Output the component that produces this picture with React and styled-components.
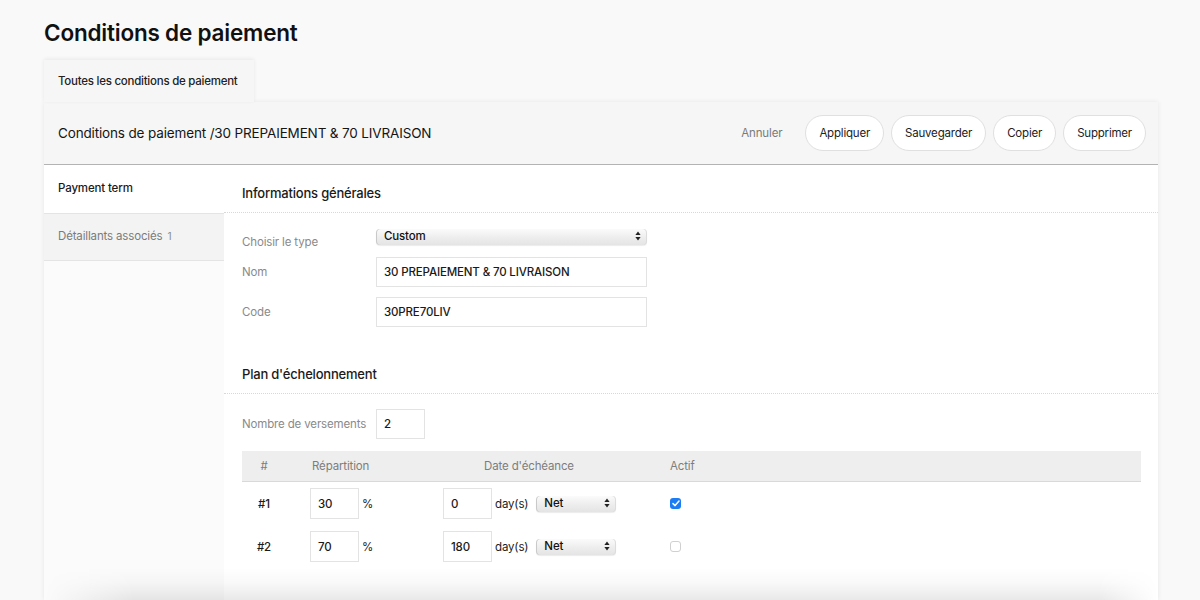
import React from "react";
import styled, { createGlobalStyle } from "styled-components";

const Global = createGlobalStyle`
  html, body { margin: 0; padding: 0; background: #f9f9f9; }
  body { font-family: Inter, "Noto Sans", sans-serif; color: #1d1d1d; -webkit-font-smoothing: antialiased; letter-spacing: -0.15px; }
  * { box-sizing: border-box; }
`;

const Page = styled.div`
  width: 1200px;
  height: 600px;
  overflow: hidden;
  padding: 0 42px 0 44px;
`;

const Title = styled.h1`
  margin: 0;
  padding-top: 18px;
  font-size: 22.5px;
  line-height: 30px;
  font-weight: 600;
  letter-spacing: -0.2px;
  color: #111;
`;

const Tabs = styled.div`
  display: flex;
  margin-top: 12px;
`;

const Tab = styled.div`
  width: 210px;
  height: 42px;
  display: flex;
  align-items: center;
  padding: 0 14px;
  white-space: nowrap;
  font-size: 11.5px;
  font-weight: 500;
  letter-spacing: -0.25px;
  color: #222;
  background: #f6f6f6;
  box-shadow: 0 -1px 4px rgba(0, 0, 0, 0.07);
  position: relative;
  z-index: 1;
`;

const Panel = styled.div`
  width: 1114px;
  background: linear-gradient(to right, #fbfbfb 180px, #fff 180px);
  box-shadow: 0 0 5px rgba(0, 0, 0, 0.08);
  position: relative;
`;

const Header = styled.div`
  height: 63px;
  display: flex;
  align-items: center;
  justify-content: space-between;
  padding: 0 12px 0 14px;
  background: #f6f6f6;
  border-bottom: 1px solid #b3b3b3;
`;

const HeaderTitle = styled.div`
  font-size: 13.5px;
  color: #151515;
`;

const Actions = styled.div`
  display: flex;
  align-items: center;
  gap: 7px;
`;

const Cancel = styled.span`
  font-size: 11.5px;
  color: #7a7a7a;
  margin-right: 16px;
`;

const Pill = styled.button`
  height: 36px;
  padding: 0 13px;
  border-radius: 18px;
  border: 1px solid #e0e0e0;
  background: #fff;
  font-family: inherit;
  font-size: 11.5px;
  letter-spacing: -0.2px;
  color: #222;
  cursor: pointer;
`;

const Body = styled.div`
  display: flex;
  height: 403px;
`;

const Sidebar = styled.div`
  width: 180px;
  background: #fbfbfb;
  display: flex;
  flex-direction: column;
`;

const SideItem = styled.div`
  height: 48px;
  display: flex;
  align-items: center;
  padding: 0 14px 3px;
  font-size: 11.5px;
  font-weight: ${(p) => (p.$active ? 500 : 400)};
  color: ${(p) => (p.$active ? "#1a1a1a" : "#7b7b7b")};
  background: ${(p) => (p.$active ? "#fff" : "#f3f3f3")};
  border-top: ${(p) => (p.$active ? "none" : "1px solid #e4e4e4")};
  border-bottom: ${(p) => (p.$active ? "none" : "1px solid #e4e4e4")};
`;

const Count = styled.span`
  font-size: 10px;
  color: #8a8a8a;
  margin-left: 5px;
`;

const Main = styled.div`
  flex: 1;
  background: #fff;
  padding-right: 17px;
`;

const SectionTitle = styled.div`
  padding: 19px 0 10px 18px;
  margin-right: -17px;
  font-size: 13px;
  line-height: 18px;
  font-weight: 500;
  letter-spacing: -0.2px;
  color: #1a1a1a;
  border-bottom: 1px dotted #d8d8d8;
`;

const Form = styled.div`
  padding: ${(p) => p.$pt}px 0 ${(p) => p.$pb}px 18px;
  display: flex;
  flex-direction: column;
  gap: ${(p) => p.$gap || 10}px;
`;

const Row = styled.div`
  display: flex;
  align-items: ${(p) => (p.$top ? "flex-start" : "center")};
  margin-top: ${(p) => p.$mt || 0}px;
`;

const Label = styled.div`
  width: ${(p) => p.$w || 134}px;
  font-size: 11.5px;
  line-height: 14px;
  color: #8a8a8a;
  margin-top: ${(p) => p.$mt || 0}px;
`;

const Input = styled.div`
  width: ${(p) => p.$w}px;
  height: ${(p) => p.$h || 30}px;
  border: 1px solid #e3e3e3;
  background: #fff;
  display: flex;
  align-items: center;
  padding: 0 7px;
  font-size: 11.5px;
  font-weight: 500;
  color: #1a1a1a;
`;

const SelectBox = styled.div`
  width: ${(p) => p.$w}px;
  height: 16px;
  border-radius: 4px;
  background: linear-gradient(to bottom, #fbfbfb 0%, #ededed 55%, #e4e4e4 100%);
  box-shadow: inset 1px 0 0 #c9c9c9, inset -1px 0 0 #dcdcdc, 0 1px 1px rgba(0, 0, 0, 0.08);
  display: flex;
  align-items: center;
  justify-content: space-between;
  padding: 0 6px 2px 8px;
  font-size: 11.5px;
  font-weight: 500;
  color: #111;
`;

const Arrows = () => (
  <svg width="6" height="10" viewBox="0 0 6 10">
    <path d="M3 0.5 L5.6 4 H0.4 Z" fill="#222" />
    <path d="M3 9.5 L5.6 6 H0.4 Z" fill="#222" />
  </svg>
);

const Select = ({ w, children }) => (
  <SelectBox $w={w}>
    <span>{children}</span>
    <Arrows />
  </SelectBox>
);

const Table = styled.div`
  margin: 12px 0 0 18px;
`;

const Grid = styled.div`
  display: grid;
  grid-template-columns: 68px 133px 227px 1fr;
  align-items: center;
  height: ${(p) => p.$h}px;
  background: ${(p) => (p.$head ? "#eeeeee" : "transparent")};
  border-bottom: ${(p) => (p.$head ? "1px solid #d9d9d9" : "none")};
`;

const Th = styled.div`
  font-size: 11.5px;
  color: #7d7d7d;
  width: ${(p) => p.$w || "auto"};
  text-align: ${(p) => p.$align || "left"};
  padding-left: ${(p) => p.$pl || 0}px;
`;

const Num = styled.div`
  width: 44px;
  text-align: center;
  font-size: 11.5px;
  font-weight: 500;
  color: #1a1a1a;
`;

const Cell = styled.div`
  display: flex;
  align-items: center;
  gap: ${(p) => p.$gap || 3}px;
  font-size: 11.5px;
  color: #222;
`;

const Unit = styled.span`
  font-size: 11.5px;
  color: #222;
  margin-right: ${(p) => p.$mr || 0}px;
`;

const Check = styled.div`
  width: 11px;
  height: 11px;
  border-radius: 3px;
  background: ${(p) => (p.$on ? "#1b7cf4" : "#fff")};
  border: ${(p) => (p.$on ? "none" : "1px solid #d0d0d0")};
  display: flex;
  align-items: center;
  justify-content: center;
`;

const Shade = styled.div`
  height: 32px;
  background: linear-gradient(to bottom, rgba(0, 0, 0, 0) 0%, rgba(0, 0, 0, 0.025) 45%, rgba(0, 0, 0, 0.085) 100%);
  -webkit-mask-image: linear-gradient(to right, transparent 0, #000 90px, #000 calc(100% - 60px), transparent 100%);
  mask-image: linear-gradient(to right, transparent 0, #000 90px, #000 calc(100% - 60px), transparent 100%);
`;

const rows = [
  { n: "#1", pct: "30", days: "0", on: true },
  { n: "#2", pct: "70", days: "180", on: false },
];

export default function App() {
  return (
    <Page>
      <Global />
      <Title>Conditions de paiement</Title>
      <Tabs>
        <Tab>Toutes les conditions de paiement</Tab>
      </Tabs>
      <Panel>
        <Header>
          <HeaderTitle>Conditions de paiement /30 PREPAIEMENT &amp; 70 LIVRAISON</HeaderTitle>
          <Actions>
            <Cancel>Annuler</Cancel>
            <Pill>Appliquer</Pill>
            <Pill>Sauvegarder</Pill>
            <Pill>Copier</Pill>
            <Pill>Supprimer</Pill>
          </Actions>
        </Header>
        <Body>
          <Sidebar>
            <SideItem $active>Payment term</SideItem>
            <SideItem>
              Détaillants associés<Count>1</Count>
            </SideItem>
          </Sidebar>
          <Main>
            <SectionTitle>Informations générales</SectionTitle>
            <Form $pt={16} $pb={19} $gap={8}>
              <Row $top>
                <Label $mt={6}>Choisir le type</Label>
                <Select w={271}>Custom</Select>
              </Row>
              <Row>
                <Label>Nom</Label>
                <Input $w={271}>30 PREPAIEMENT &amp; 70 LIVRAISON</Input>
              </Row>
              <Row $mt={2}>
                <Label>Code</Label>
                <Input $w={271}>30PRE70LIV</Input>
              </Row>
            </Form>
            <SectionTitle>Plan d'échelonnement</SectionTitle>
            <Form $pt={15} $pb={0}>
              <Row>
                <Label>Nombre de versements</Label>
                <Input $w={49}>2</Input>
              </Row>
            </Form>
            <Table>
              <Grid $head $h={31}>
                <Th $w="44px" $align="center">#</Th>
                <Th $pl={2}>Répartition</Th>
                <Th $w="172px" $align="center">Date d'échéance</Th>
                <Th>Actif</Th>
              </Grid>
              {rows.map((r) => (
                <Grid key={r.n} $h={43}>
                  <Num>{r.n}</Num>
                  <Cell>
                    <Input $w={49} $h={31}>{r.pct}</Input>
                    <Unit>%</Unit>
                  </Cell>
                  <Cell>
                    <Input $w={49} $h={31}>{r.days}</Input>
                    <Unit $mr={5}>day(s)</Unit>
                    <Select w={80}>Net</Select>
                  </Cell>
                  <Cell>
                    <Check $on={r.on}>
                      {r.on && (
                        <svg width="8" height="7" viewBox="0 0 8 7">
                          <path d="M1 3.6 L3.1 5.6 L7 1" stroke="#fff" strokeWidth="1.5" fill="none" strokeLinecap="round" strokeLinejoin="round" />
                        </svg>
                      )}
                    </Check>
                  </Cell>
                </Grid>
              ))}
            </Table>
          </Main>
        </Body>
        <Shade />
      </Panel>
    </Page>
  );
}
